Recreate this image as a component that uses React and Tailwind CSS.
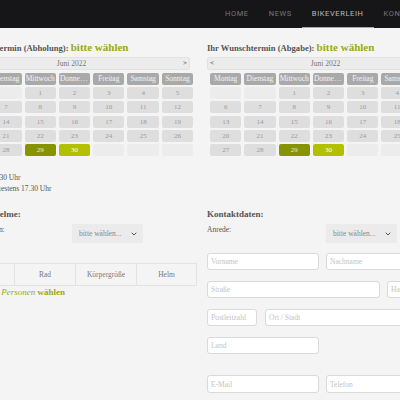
import { ChevronDown } from "lucide-react";

const weekdays = ["Montag", "Dienstag", "Mittwoch", "Donnerstag", "Freitag", "Samstag", "Sonntag"];

// Juni 2022 starts on a Wednesday
const days = [null, null, ...Array.from({ length: 30 }, (_, i) => i + 1), null, null, null];

function DayCell({ day }) {
  if (day === null) {
    return <div className="h-[12px] rounded-[2px] bg-[#ececec]" />;
  }
  if (day === 29) {
    return (
      <div className="h-[12px] rounded-[2px] bg-[#879300] text-[#e9edc8] text-[7px] leading-[12px] text-center">
        {day}
      </div>
    );
  }
  if (day === 30) {
    return (
      <div className="h-[12px] rounded-[2px] bg-[#b3c000] text-white text-[7px] leading-[12px] text-center">
        {day}
      </div>
    );
  }
  return (
    <div className="h-[12px] rounded-[2px] bg-[#dedede] text-[#9a9a9a] text-[7px] leading-[12px] text-center">
      {day}
    </div>
  );
}

function Calendar({ label }) {
  return (
    <div>
      <div className="mt-[10px] mb-[3px] h-[16px] leading-[16px] whitespace-nowrap">
        <span className="text-[8.6px] font-bold text-[#555]">Ihr Wunschtermin ({label}): </span>
        <span className="text-[11px] font-bold text-[#9aa914]">bitte wählen</span>
      </div>
      <div className="w-[237px] h-[13px] rounded-[2px] border border-[#e2e2e2] bg-[#ececec] flex items-center justify-between px-[2px] text-[#777]">
        <span className="text-[7px] font-bold text-[#444]">&lt;</span>
        <span className="text-[7.5px]">Juni 2022</span>
        <span className="text-[7px] font-bold text-[#444]">&gt;</span>
      </div>
      <div className="ml-[3px] mt-[3px] grid grid-cols-[repeat(7,31.3px)] gap-x-[3px] gap-y-[2.2px]">
        {weekdays.map((d) => (
          <div
            key={d}
            className="h-[12px] rounded-[2px] bg-[#a9a9a9] text-[#f4f4f4] text-[7.5px] leading-[12px] text-center truncate px-[1px]"
          >
            {d}
          </div>
        ))}
        {days.map((d, i) => (
          <DayCell key={i} day={d} />
        ))}
      </div>
    </div>
  );
}

function Select() {
  return (
    <div className="w-[71px] h-[19px] bg-[#ebebeb] flex items-center justify-between pl-[7px] pr-[5px]">
      <span className="text-[7.5px] text-[#888]">bitte wählen...</span>
      <ChevronDown size={8} strokeWidth={3} className="text-[#555]" />
    </div>
  );
}

function Field({ placeholder, width }) {
  return (
    <input
      placeholder={placeholder}
      className={`${width} h-[17.4px] shrink-0 rounded-[3px] border border-[#dadada] bg-white px-[3px] text-[7.5px] placeholder:text-[#c4c4c4] outline-none`}
    />
  );
}

export default function App() {
  return (
    <div className="w-[400px] h-[400px] overflow-hidden bg-[#f4f4f4] font-['Liberation_Serif',serif]">
      {/* Top navigation */}
      <div className="h-[28px] bg-[#161618] flex items-stretch pl-[215px] whitespace-nowrap font-['Roboto',sans-serif] text-[7.5px] tracking-[0.6px]">
        <div className="px-[10px] flex items-center text-[#777]">HOME</div>
        <div className="px-[10px] flex items-center text-[#777]">NEWS</div>
        <div className="px-[10px] flex items-center text-[#bdbdbd] border-b border-[#a8a8a8]">BIKEVERLEIH</div>
        <div className="px-[10px] flex items-center text-[#777]">KONTAKT</div>
      </div>

      <div className="ml-[-47px] w-[500px]">
        {/* Calendars */}
        <div className="h-[172px] flex gap-[10px]">
          <div className="w-[244px] shrink-0">
            <Calendar label="Abholung" />
            <div className="mt-[16px] text-[7.5px] leading-[11px] text-[#555] whitespace-nowrap">
              <div>Abholung ab 9.30 Uhr</div>
              <div>Abgabe bis spätestens 17.30 Uhr</div>
            </div>
          </div>
          <div className="w-[244px] shrink-0">
            <Calendar label="Abgabe" />
          </div>
        </div>

        {/* Forms */}
        <div className="flex gap-[10px] pt-[7px]">
          <div className="w-[244px] shrink-0">
            <div className="h-[14px] leading-[14px] text-[9px] font-bold text-[#555] whitespace-nowrap">
              <span className="tracking-[0.5px]">Räder &amp; </span>Helme:
            </div>
            <div className="mt-[3px] flex items-start">
              <div className="w-[119px] text-[7.5px] leading-[12px] text-[#555] whitespace-nowrap tracking-[-0.1px]">Stelle Anzahl ein:</div>
              <Select />
            </div>
            <div className="mt-[20px] grid grid-cols-4 h-[23px] border-y border-[#e3e3e3] text-[7.5px] text-[#7a7a7a]">
              <div className="flex items-center justify-center">Person</div>
              <div className="flex items-center justify-center border-l border-[#e3e3e3]">Rad</div>
              <div className="flex items-center justify-center border-l border-[#e3e3e3]">Körpergröße</div>
              <div className="flex items-center justify-center border-x border-[#e3e3e3]">Helm</div>
            </div>
            <div className="h-[12px] leading-[12px] text-[9px] text-[#9aa914] whitespace-nowrap pl-[2px]">
              <span className="italic">Bitte Anzahl Personen</span> <span className="font-bold">wählen</span>
            </div>
          </div>

          <div className="w-[231px] shrink-0">
            <div className="h-[14px] leading-[14px] text-[9px] font-bold text-[#555] whitespace-nowrap">
              Kontaktdaten:
            </div>
            <div className="mt-[3px] flex items-start">
              <div className="w-[119px] text-[7.5px] leading-[12px] text-[#555]">Anrede:</div>
              <Select />
            </div>
            <div className="mt-[10px] flex flex-col gap-[10.6px]">
              <div className="flex gap-[7px]">
                <Field placeholder="Vorname" width="w-[112px]" />
                <Field placeholder="Nachname" width="w-[112px]" />
              </div>
              <div className="flex gap-[7px]">
                <Field placeholder="Straße" width="w-[173px]" />
                <Field placeholder="Hausnummer" width="w-[51px]" />
              </div>
              <div className="flex gap-[8px]">
                <Field placeholder="Postleitzahl" width="w-[50px]" />
                <Field placeholder="Ort / Stadt" width="w-[173px]" />
              </div>
              <div className="flex gap-[7px]">
                <Field placeholder="Land" width="w-[112px]" />
              </div>
              <div className="mt-[10.4px] flex gap-[7px]">
                <Field placeholder="E-Mail" width="w-[112px]" />
                <Field placeholder="Telefon" width="w-[112px]" />
              </div>
            </div>
          </div>
        </div>
      </div>
    </div>
  );
}
